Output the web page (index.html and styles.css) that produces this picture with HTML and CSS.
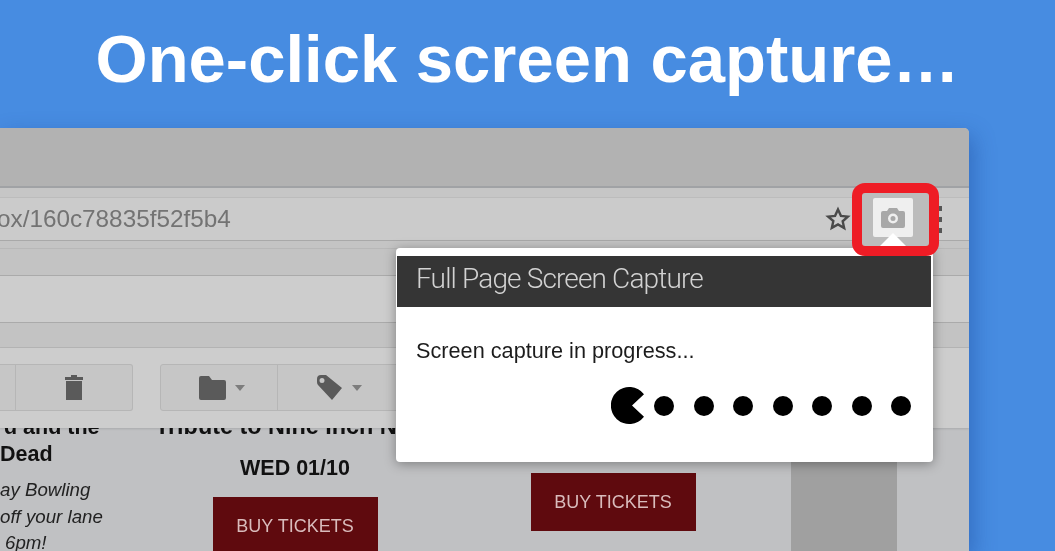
FILE: index.html
```html
<!DOCTYPE html>
<html lang="en">
<head>
  <meta charset="UTF-8" />
  <meta name="viewport" content="width=device-width, initial-scale=1.0"/>
  <title>One-click screen capture</title>
  <link rel="stylesheet" href="styles.css">
</head>
<body>
  <h1 class="headline">One-click screen capture…</h1>

  <div class="browser">
    <div class="tabstrip"></div>
    <div class="gap-top"></div>
    <div class="omnibox">
      <span class="url">ox/160c78835f52f5b4</span>
      <svg class="star" viewBox="0 0 24 24"><path d="M12 3.2l2.7 5.900 6.400.7-4.800 4.300 1.400 6.300L12 17l-5.700 3.200 1.400-6.300L2.900 9.800l6.400-.7z"/></svg>
      <span class="menu-dots"><i></i><i></i><i></i></span>
    </div>
    <div class="gap-bottom"></div>
    <div class="band"></div>
    <div class="searchrow"></div>
    <div class="band band-low"></div>

    <div class="actions">
      <div class="btn-group group-left">
        <div class="btn btn-cut"></div>
        <div class="btn btn-trash">
          <svg class="icon" width="20" height="26" viewBox="0 0 20 26"><path d="M7 0h6v2h6v3H1V2h6zM2 6h16v19H2z"/></svg>
        </div>
      </div>
      <div class="btn-group group-right">
        <div class="btn btn-folder">
          <svg class="icon" width="27" height="24" viewBox="0 0 27 24"><path d="M0 2q0-2 2-2h8l3 4h12q2 0 2 2v16q0 2-2 2H2q-2 0-2-2z"/></svg>
          <span class="caret"></span>
        </div>
        <div class="btn btn-tag">
          <svg class="icon" width="27" height="27" viewBox="0 0 27 27"><path fill-rule="evenodd" d="M1 5q0-4 4-4h5l16 13-10 12L2 11q-1-1-1-3zM6 4a2.500 2.500 0 1 0 0 5 2.500 2.500 0 0 0 0-5z"/></svg>
          <span class="caret"></span>
        </div>
      </div>
    </div>

    <div class="mail">
      <div class="col col-a">
        <div class="show-name name-cut">d and the</div>
        <div class="show-name">Dead</div>
        <div class="blurb">ay Bowling</div>
        <div class="blurb">off your lane</div>
        <div class="blurb blurb-end">6pm!</div>
      </div>
      <div class="col col-b">
        <div class="show-name name-wide">Tribute to Nine Inch Nails</div>
        <div class="show-date">WED 01/10</div>
        <div class="buy">BUY TICKETS</div>
      </div>
      <div class="col col-c">
        <div class="buy">BUY TICKETS</div>
      </div>
      <div class="col col-d"></div>
    </div>

    <div class="highlight">
      <div class="ext-btn">
        <svg width="24" height="20" viewBox="0 0 24 20"><path fill-rule="evenodd" d="M8 0h8l2 3h4q2 0 2 2v13q0 2-2 2H2q-2 0-2-2V5q0-2 2-2h4zM12 5.500a5 5 0 1 0 0 10 5 5 0 0 0 0-10zM12 8a2.500 2.500 0 1 1 0 5 2.500 2.500 0 0 1 0-5z"/></svg>
      </div>
      <svg class="ext-notch" width="26" height="13" viewBox="0 0 26 13"><path d="M13 0l13 13H0z"/></svg>
    </div>

    <div class="popup">
      <div class="popup-title">Full Page Screen Capture</div>
      <div class="popup-body">
        <p class="popup-msg">Screen capture in progress...</p>
        <div class="progress">
          <svg class="pacman" width="37" height="37" viewBox="0 0 37 37"><path d="M33 7.200A18.500 18.500 0 1 0 33 29.800L21 18.500z"/></svg>
          <span class="pellet"></span>
          <span class="pellet"></span>
          <span class="pellet"></span>
          <span class="pellet"></span>
          <span class="pellet"></span>
          <span class="pellet"></span>
          <span class="pellet"></span>
        </div>
      </div>
    </div>
  </div>
</body>
</html>
```

FILE: styles.css
```css
* {
  box-sizing: border-box;
}
html, body {
  height: 100%;
}
body {
  margin: 0;
  background: #478ce1;
  font-family: "Liberation Sans", Arial, sans-serif;
  overflow: hidden;
}
.headline {
  margin: 0;
  height: 128px;
  padding: 23px 0 0 0;
  text-align: center;
  color: #fff;
  font-size: 67px;
  line-height: 72px;
  font-weight: bold;
}
.browser {
  position: relative;
  width: 969px;
  height: 423px;
  border-top-right-radius: 5px;
  overflow: hidden;
  background: #c0c1c3;
  box-shadow: 4px 8px 22px rgba(20,60,140,0.4);
  filter: blur(0.5px);
}

/* chrome rows */
.tabstrip {
  height: 60px;
  background: #b2b2b2;
  border-bottom: 2px solid #a0a2a5;
}
.gap-top {
  height: 9px;
  background: #c6c6c6;
}
.omnibox {
  height: 44px;
  display: flex;
  align-items: center;
  background: #cbcbcb;
  border-top: 1px solid #bcbcbc;
  border-bottom: 1px solid #a9a9a9;
  padding-right: 27px;
}
.url {
  margin-left: -3px;
  font-size: 24.300px;
  color: #737373;
}
.star {
  margin-left: auto;
  margin-right: 86px;
  width: 26px;
  height: 26px;
  fill: none;
  stroke: #4a4a4a;
  stroke-width: 2.200;
}
.menu-dots {
  display: flex;
  flex-direction: column;
  gap: 6px;
}
.menu-dots i {
  display: block;
  width: 5px;
  height: 5px;
  background: #555;
}
.gap-bottom {
  height: 7px;
  background: #c4c4c4;
}
.band {
  height: 28px;
  background: #c3c3c3;
  border-top: 1px solid #b8b8b8;
  border-bottom: 1px solid #aaa;
}
.band-low {
  height: 26px;
  border-bottom: 1px solid #b5b5b5;
  border-top: 1px solid #aaa;
}
.searchrow {
  height: 46px;
  background: #cdcdcd;
}

/* gmail action row */
.actions {
  position: relative;
  z-index: 1;
  height: 80px;
  display: flex;
  gap: 27px;
  padding-top: 16px;
  background: #cdcdcd;
  box-shadow: 0 1px 2px rgba(0,0,0,0.12);
}
.btn-group {
  display: flex;
  height: 47px;
  border: 1px solid #b6b6b6;
  border-radius: 3px;
  background: #c6c6c6;
}
.group-left {
  margin-left: -2px;
  width: 135px;
  border-left: 0;
}
.group-right {
  width: 280px;
}
.btn {
  display: flex;
  align-items: center;
  justify-content: center;
  gap: 9px;
}
.btn-cut {
  width: 18px;
  border-right: 1px solid #b6b6b6;
}
.btn-trash {
  flex: 1;
}
.btn-folder {
  width: 117px;
  justify-content: flex-start;
  padding-left: 38px;
  border-right: 1px solid #b6b6b6;
}
.btn-tag {
  flex: 1;
  justify-content: flex-start;
  padding-left: 38px;
  gap: 9px;
}
.icon {
  fill: #5a5a5a;
}
.caret {
  width: 0;
  height: 0;
  border-left: 5px solid transparent;
  border-right: 5px solid transparent;
  border-top: 6px solid #7d7d7d;
}

/* message body */
.mail {
  display: grid;
  grid-template-columns: 155px 280px 356px 106px 72px;
  height: 123px;
  overflow: hidden;
}
.col {
  white-space: nowrap;
  color: #111;
}
.col-a {
  margin-top: -14px;
}
.col-b {
  margin-top: -15px;
  text-align: center;
}
.col-c {
  padding-top: 45px;
  display: flex;
  justify-content: center;
}
.col-d {
  background: #a0a0a0;
}
.show-name {
  font-size: 21.500px;
  font-weight: bold;
  line-height: 27px;
}
.name-cut {
  padding-left: 4px;
}
.name-wide {
  font-size: 23.400px;
}
.show-date {
  margin-top: 15px;
  font-size: 21.500px;
  font-weight: bold;
  line-height: 27px;
}
.blurb {
  font-size: 18.700px;
  font-style: italic;
  line-height: 26.500px;
  color: #222;
}
.show-name + .blurb {
  margin-top: 9px;
}
.blurb-end {
  padding-left: 5px;
}
.buy {
  display: inline-flex;
  align-items: center;
  justify-content: center;
  width: 165px;
  height: 58px;
  background: #5f0a0e;
  color: #d9bcbc;
  font-size: 18px;
}
.col-b .buy {
  margin-top: 15px;
}

/* red box round the extension button */
.highlight {
  position: absolute;
  top: 55px;
  left: 852px;
  width: 87px;
  height: 73px;
  border: 10px solid #ee1c25;
  border-radius: 13px;
  background: #bcbcbc;
  z-index: 3;
}
.ext-btn {
  margin: 5px 0 0 11px;
  width: 40px;
  height: 39px;
  border-radius: 2px;
  background: #efefef;
  display: flex;
  align-items: center;
  justify-content: center;
}
.ext-btn svg {
  fill: #a8a8a8;
}
.ext-notch {
  position: absolute;
  left: 18px;
  bottom: 0;
  fill: #fff;
}

/* popup */
.popup {
  position: absolute;
  top: 120px;
  left: 396px;
  width: 537px;
  height: 214px;
  padding: 8px 2px 0 1px;
  border-radius: 4px;
  background: #fff;
  box-shadow: 0 2px 12px rgba(0,0,0,0.35);
  z-index: 2;
}
.popup-title {
  height: 51px;
  padding-left: 19px;
  background: #353535;
  color: #d2d2d2;
  font-family: Roboto, "Liberation Sans", sans-serif;
  font-weight: 300;
  font-size: 28px;
  line-height: 45px;
  letter-spacing: -0.850px;
}
.popup-body {
  padding: 29px 20px 0 19px;
}
.popup-msg {
  margin: 0;
  font-size: 21.700px;
  line-height: 30px;
  color: #1c1c1c;
}
.progress {
  display: flex;
  justify-content: flex-end;
  align-items: center;
  gap: 19.500px;
  margin-top: 21px;
}
.pacman {
  margin-right: -13.500px;
  fill: #000;
}
.pellet {
  width: 20px;
  height: 20px;
  border-radius: 50%;
  background: #000;
}
```
